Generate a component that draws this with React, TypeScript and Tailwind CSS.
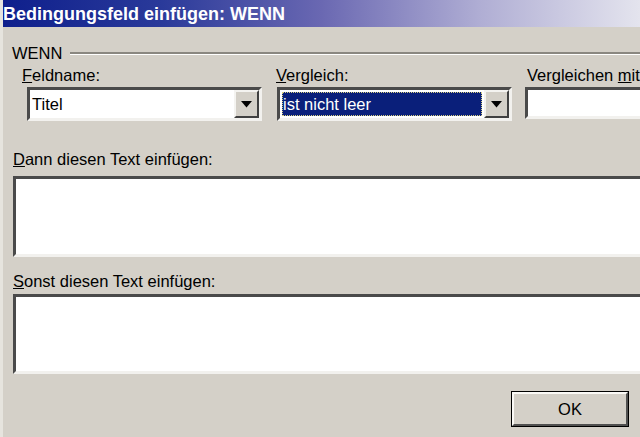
import React from "react";

const sunken =
  "border-[3px] border-t-[#4a4a4a] border-l-[#4a4a4a] border-b-[#f2f1ee] border-r-[#f2f1ee] bg-white";

function DropButton() {
  return (
    <div className="h-full w-[25px] shrink-0 bg-[#d4d0c8] border-2 border-t-[#f4f3f0] border-l-[#f4f3f0] border-b-[#404040] border-r-[#404040] flex items-center justify-center">
      <svg width="11" height="7" viewBox="0 0 11 7">
        <path d="M0 0 H11 L5.5 6.5 Z" fill="#000" />
      </svg>
    </div>
  );
}

export default function App() {
  return (
    <div className="w-[640px] h-[437px] overflow-hidden bg-[#d4d0c8] text-black font-['Liberation_Sans',Arial,sans-serif] flex flex-col border-l-[3px] border-l-[#e6e4de]">
      {/* Title bar */}
      <div className="h-[27px] shrink-0 flex items-center bg-[linear-gradient(90deg,#0e1f8c_0%,#2a3a9a_25%,#6a68b2_50%,#b0aed4_75%,#e4e4ee_100%)]">
        <span className="text-white font-bold text-[18px] leading-none whitespace-nowrap">
          Bedingungsfeld einfügen: WENN
        </span>
      </div>

      <div className="flex-1 flex flex-col pl-[8px] text-[16.5px] leading-[18px]">
        {/* Group header */}
        <div className="mt-[17px] flex items-center">
          <span className="ml-[1px]">WENN</span>
          <div className="ml-[8px] flex-1 h-[3px] border-t-2 border-t-[#8a8780] border-b border-b-white" />
        </div>

        {/* Field row */}
        <div className="mt-[4px] flex whitespace-nowrap">
          <div className="w-[265px] shrink-0 pl-[11px] flex flex-col">
            <span>
              <u>F</u>eldname:
            </span>
            <div className={`mt-[3px] ml-[5px] w-[235px] h-[34px] flex ${sunken}`}>
              <div className="flex-1 flex items-center pl-[2px]">Titel</div>
              <DropButton />
            </div>
          </div>
          <div className="w-[249px] shrink-0 flex flex-col">
            <span>
              <u>V</u>ergleich:
            </span>
            <div className={`mt-[3px] ml-[1px] w-[235px] h-[34px] flex ${sunken}`}>
              <div className="flex-1 flex items-center p-[2px]">
                <div className="w-full h-full flex items-center bg-[#0a1f7a] text-white pl-[1px] outline-1 outline-dotted outline-[#d8d080] -outline-offset-1">
                  ist nicht leer
                </div>
              </div>
              <DropButton />
            </div>
          </div>
          <div className="flex-1 flex flex-col">
            <span className="ml-[2px]">
              Vergleichen <u>m</u>it:
            </span>
            <div className={`mt-[3px] w-[200px] h-[32px] ${sunken}`} />
          </div>
        </div>

        {/* Dann */}
        <span className="mt-[29px] ml-[2px] whitespace-nowrap">
          <u>D</u>ann diesen Text einfügen:
        </span>
        <div className={`mt-[8px] ml-[2px] w-[700px] h-[81px] ${sunken}`} />

        {/* Sonst */}
        <span className="mt-[15px] ml-[2px] whitespace-nowrap">
          <u>S</u>onst diesen Text einfügen:
        </span>
        <div className={`mt-[4px] ml-[2px] w-[700px] h-[80px] ${sunken}`} />

        {/* Buttons */}
        <div className="mt-[17px] flex justify-end pr-[11px]">
          <div className="w-[118px] h-[36px] border border-black">
            <div className="w-full h-full flex items-center justify-center bg-[#d4d0c8] border-2 border-t-[#faf9f6] border-l-[#faf9f6] border-b-[#505050] border-r-[#505050]">
              OK
            </div>
          </div>
        </div>
      </div>
    </div>
  );
}
